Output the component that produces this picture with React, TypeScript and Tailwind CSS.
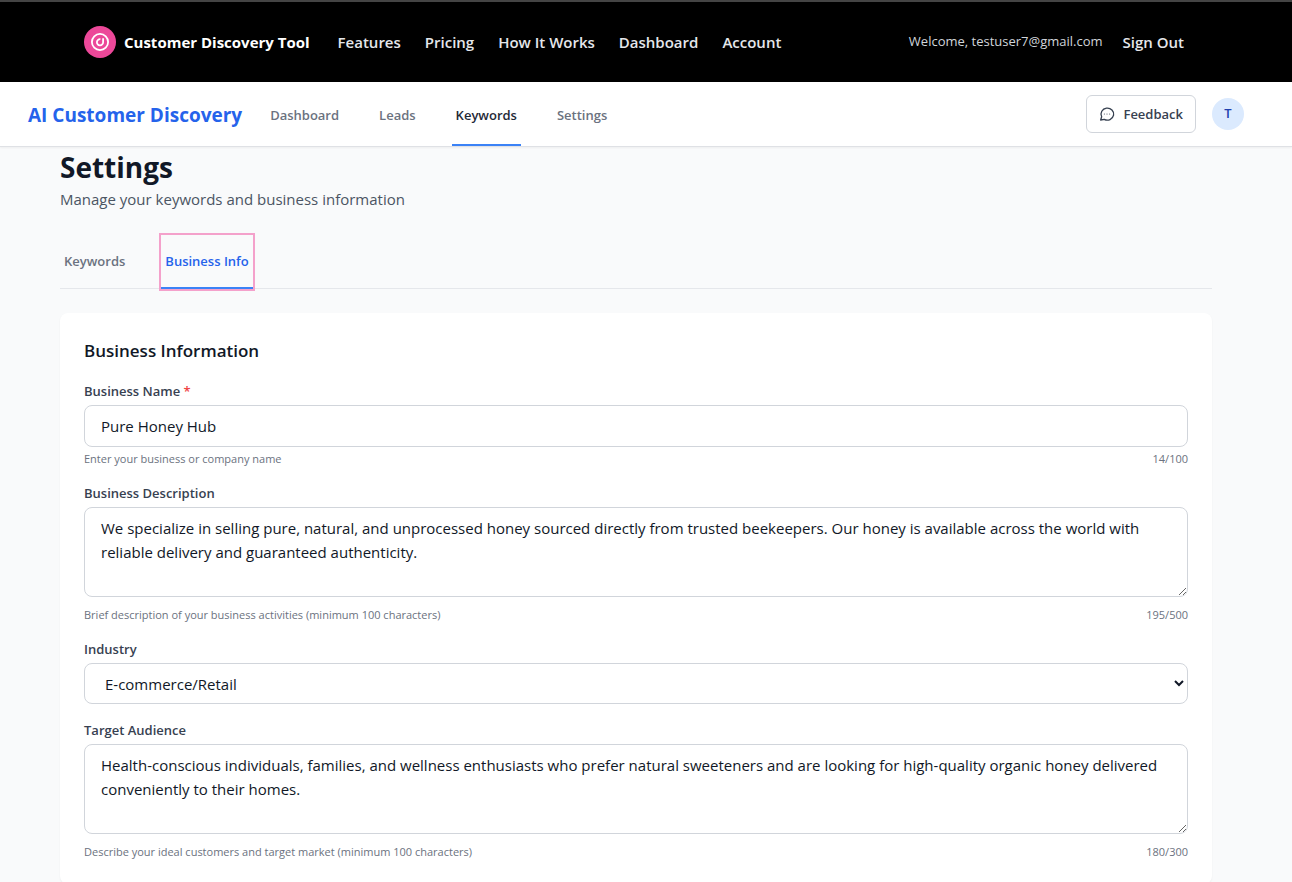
import { useState } from "react";
import { clsx } from "clsx";

const SITE_LINKS = ["Features", "Pricing", "How It Works", "Dashboard", "Account"];

const APP_LINKS = ["Dashboard", "Leads", "Keywords", "Settings"];

const INDUSTRIES = ["E-commerce/Retail", "Technology", "Healthcare", "Finance", "Education"];

const fieldClass =
  "w-full rounded-lg border border-[#d1d5db] bg-white text-[15px] leading-6 text-[#111827]";

function LogoMark(): React.ReactElement {
  return (
    <svg viewBox="0 0 32 32" className="size-8 shrink-0" fill="none" aria-hidden="true">
      <circle cx="16" cy="16" r="16" fill="#ec4899" />
      <circle cx="16" cy="16" r="8.1" stroke="white" strokeWidth="1.8" />
      <path
        d="M16.4 13.2a3.1 3.1 0 1 0 2.7 3V12.2"
        stroke="white"
        strokeWidth="1.8"
      />
    </svg>
  );
}

function FeedbackIcon(): React.ReactElement {
  return (
    <svg
      viewBox="0 0 24 24"
      className="size-4 shrink-0"
      fill="none"
      stroke="currentColor"
      strokeWidth="2"
      strokeLinecap="round"
      strokeLinejoin="round"
      aria-hidden="true"
    >
      <path d="M7.9 20A9.5 9 0 1 0 4 16.1L2.5 21Z" />
      <path d="M8 12h.01M12 12h.01M16 12h.01" strokeWidth="1.6" />
    </svg>
  );
}

function SiteHeader(): React.ReactElement {
  return (
    <header className="border-t-2 border-[#444444] bg-black pr-5">
      <div className="mx-auto flex h-20 max-w-[1104px] items-center justify-between pr-1">
        <div className="flex items-center gap-7">
          <a href="#" className="flex items-center gap-2 text-[15px] font-bold text-white">
            <LogoMark />
            Customer Discovery Tool
          </a>
          <nav className="flex items-center gap-6 text-[15px] font-semibold text-[#e5e7eb]">
            {SITE_LINKS.map((link) => (
              <a key={link} href="#">
                {link}
              </a>
            ))}
          </nav>
        </div>
        <div className="flex items-center gap-5 text-[#e5e7eb]">
          <span className="text-[13px] text-[#d1d5db]">Welcome, testuser7@gmail.com</span>
          <button type="button" className="text-[15px] font-semibold">
            Sign Out
          </button>
        </div>
      </div>
    </header>
  );
}

function AppNav(): React.ReactElement {
  return (
    <div className="border-b border-[#dfe1e5] bg-white pr-5 shadow-xs">
      <div className="mx-auto flex h-16 max-w-[1216px] items-center justify-between">
        <div className="flex h-full items-center gap-6">
          <a href="#" className="pt-0.5 text-[19px] font-bold text-[#2563eb]">
            AI Customer Discovery
          </a>
          <nav className="flex h-full gap-8 text-[13px] font-semibold">
            {APP_LINKS.map((link) => (
              <a
                key={link}
                href="#"
                className={clsx(
                  "flex items-center border-b-2 px-1 pt-1.5",
                  link === "Keywords"
                    ? "border-[#3b82f6] text-[#1f2937]"
                    : "border-transparent text-[#6b7280]",
                )}
              >
                {link}
              </a>
            ))}
          </nav>
        </div>
        <div className="flex items-center gap-4">
          <button
            type="button"
            className="flex items-center gap-2 rounded-md border border-[#d1d5db] bg-white px-3 py-2 text-[13px] leading-5 font-semibold text-[#374151]"
          >
            <FeedbackIcon />
            Feedback
          </button>
          <button
            type="button"
            className="flex size-8 items-center justify-center rounded-full bg-[#dbeafe] text-[13px] font-semibold text-[#1e40af]"
          >
            T
          </button>
        </div>
      </div>
    </div>
  );
}

interface TextFieldProps {
  id: string;
  label: string;
  hint: string;
  max: number;
  defaultValue: string;
  required?: boolean;
  /** Renders a textarea instead of a single line input */
  multiline?: boolean;
}

function TextField({
  id,
  label,
  hint,
  max,
  defaultValue,
  required = false,
  multiline = false,
}: TextFieldProps): React.ReactElement {
  const [value, setValue] = useState(defaultValue);

  return (
    <div>
      <label htmlFor={id} className="mb-1 block text-[13px] leading-5 font-semibold text-[#374151]">
        {label}
        {required && <span className="text-[#ef4444]"> *</span>}
      </label>
      {multiline ? (
        <textarea
          id={id}
          rows={3}
          maxLength={max}
          value={value}
          onChange={(e) => setValue(e.target.value)}
          className={clsx(fieldClass, "block resize-y px-4 py-2")}
        />
      ) : (
        <input
          id={id}
          type="text"
          maxLength={max}
          value={value}
          onChange={(e) => setValue(e.target.value)}
          className={clsx(fieldClass, "block px-4 py-2")}
        />
      )}
      <div
        className={clsx(
          "flex justify-between text-[11px] leading-4 text-[#6b7280]",
          multiline ? "mt-2.5" : "mt-1",
        )}
      >
        <span>{hint}</span>
        <span>
          {value.length}/{max}
        </span>
      </div>
    </div>
  );
}

export default function App(): React.ReactElement {
  const [tab, setTab] = useState("Business Info");

  return (
    <div className="min-h-screen bg-[#f9fafb] font-['Open_Sans','Noto_Sans',sans-serif]">
      <SiteHeader />
      <AppNav />
      <main className="pr-5 pb-8">
        <div className="mx-auto max-w-6xl">
          <h1 className="text-[28px] leading-10 font-bold text-[#111827]">Settings</h1>
          <p className="text-[15px] leading-6 text-[#4b5563]">
            Manage your keywords and business information
          </p>
          <div className="mt-6 flex gap-8 border-b border-[#e5e7eb]">
            {["Keywords", "Business Info"].map((name) => (
              <button
                key={name}
                type="button"
                onClick={() => setTab(name)}
                className={clsx(
                  "-mb-px border-b-2 px-1 py-4 text-[13px] leading-5 font-semibold",
                  name === tab
                    ? "border-[#3b82f6] text-[#2563eb] outline-2 outline-[#f4a1cb]"
                    : "border-transparent text-[#6b7280]",
                )}
              >
                {name}
              </button>
            ))}
          </div>
          <form className="mt-6 space-y-4 rounded-lg bg-white p-6 shadow-xs">
            <h2 className="text-[17px] leading-7 font-semibold text-[#111827]">
              Business Information
            </h2>
            <TextField
              id="business-name"
              label="Business Name"
              hint="Enter your business or company name"
              max={100}
              defaultValue="Pure Honey Hub"
              required
            />
            <TextField
              id="business-description"
              label="Business Description"
              hint="Brief description of your business activities (minimum 100 characters)"
              max={500}
              defaultValue="We specialize in selling pure, natural, and unprocessed honey sourced directly from trusted beekeepers. Our honey is available across the world with reliable delivery and guaranteed authenticity."
              multiline
            />
            <div>
              <label
                htmlFor="industry"
                className="mb-1 block text-[13px] leading-5 font-semibold text-[#374151]"
              >
                Industry
              </label>
              <select id="industry" className={clsx(fieldClass, "block h-[41px] pl-4")}>
                {INDUSTRIES.map((industry) => (
                  <option key={industry}>{industry}</option>
                ))}
              </select>
            </div>
            <TextField
              id="target-audience"
              label="Target Audience"
              hint="Describe your ideal customers and target market (minimum 100 characters)"
              max={300}
              defaultValue="Health-conscious individuals, families, and wellness enthusiasts who prefer natural sweeteners and are looking for high-quality organic honey delivered conveniently to their homes."
              multiline
            />
          </form>
        </div>
      </main>
    </div>
  );
}
